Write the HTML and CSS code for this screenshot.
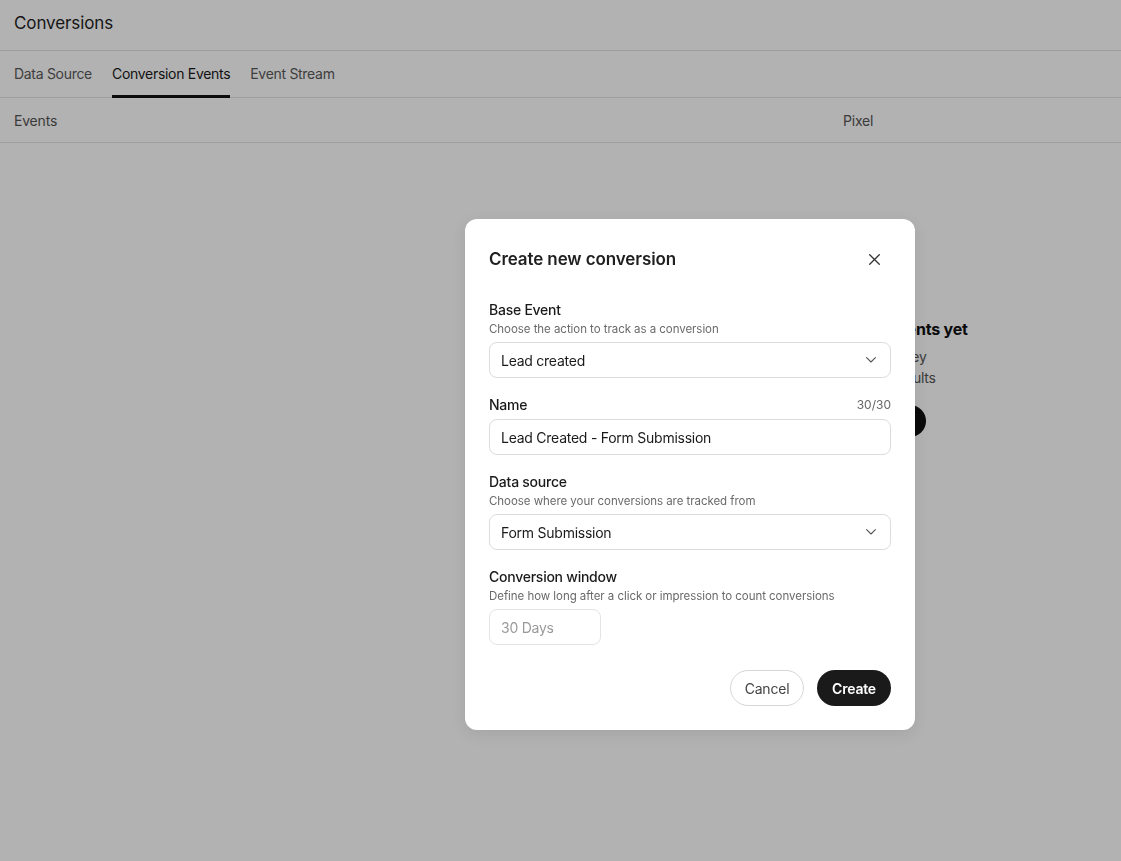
FILE: index.html
```html
<!DOCTYPE html>
<html lang="en">
<head>
<meta charset="utf-8">
<title>Conversions</title>
<link rel="stylesheet" href="styles.css">
</head>
<body>
<div class="page">
  <header class="page-header">Conversions</header>
  <nav class="tabs">
    <a class="tab">Data Source</a>
    <a class="tab active">Conversion Events</a>
    <a class="tab">Event Stream</a>
  </nav>
  <div class="table-head">
    <span class="col-events">Events</span>
    <span class="col-pixel">Pixel</span>
  </div>
  <div class="empty">
    <div class="empty-title">No conversion events yet</div>
    <div class="empty-text">Track the journey<br>and measure results</div>
    <button class="empty-btn">Create event</button>
  </div>
</div>

<div class="overlay"></div>

<div class="modal" role="dialog">
  <div class="modal-head">
    <h2 class="modal-title">Create new conversion</h2>
    <button class="close" aria-label="Close">
      <svg width="11" height="11" viewBox="0 0 11 11"><path d="M0.7 0.7 L10.3 10.3 M10.3 0.7 L0.7 10.3" stroke="#333" stroke-width="1.3" stroke-linecap="round" fill="none"/></svg>
    </button>
  </div>

  <div class="field first">
    <div class="label-row"><span class="label">Base Event</span></div>
    <div class="helper">Choose the action to track as a conversion</div>
    <div class="control select">
      <span>Lead created</span>
      <svg class="chev" width="10" height="6" viewBox="0 0 10 6"><path d="M0.6 0.6 L5 5 L9.4 0.6" stroke="#555" stroke-width="1.1" fill="none" stroke-linecap="round" stroke-linejoin="round"/></svg>
    </div>
  </div>

  <div class="field">
    <div class="label-row"><span class="label">Name</span><span class="counter">30/30</span></div>
    <div class="control"><span>Lead Created - Form Submission</span></div>
  </div>

  <div class="field">
    <div class="label-row"><span class="label">Data source</span></div>
    <div class="helper">Choose where your conversions are tracked from</div>
    <div class="control select">
      <span>Form Submission</span>
      <svg class="chev" width="10" height="6" viewBox="0 0 10 6"><path d="M0.6 0.6 L5 5 L9.4 0.6" stroke="#555" stroke-width="1.1" fill="none" stroke-linecap="round" stroke-linejoin="round"/></svg>
    </div>
  </div>

  <div class="field">
    <div class="label-row"><span class="label">Conversion window</span></div>
    <div class="helper">Define how long after a click or impression to count conversions</div>
    <div class="control small muted"><span>30 Days</span></div>
  </div>

  <div class="modal-foot">
    <button class="btn btn-cancel">Cancel</button>
    <button class="btn btn-create">Create</button>
  </div>
</div>
</body>
</html>
```

FILE: styles.css
```css
* { box-sizing: border-box; }
html, body { margin: 0; padding: 0; }
body {
  font-family: Inter, "Noto Sans", sans-serif;
  background: #ffffff;
  color: #1a1a1a;
  width: 1121px;
  height: 861px;
  overflow: hidden;
}
.page { position: relative; height: 861px; }
.page-header {
  height: 51px;
  padding: 12px 14px 0;
  font-size: 17px;
  line-height: 22px;
  color: #1f1f1f;
  letter-spacing: -0.1px;
  border-bottom: 1px solid #e3e3e3;
}
.tabs {
  display: flex;
  gap: 20px;
  padding: 0 14px;
  height: 47px;
  border-bottom: 1px solid #e3e3e3;
}
.tab {
  font-size: 14px;
  letter-spacing: -0.3px;
  line-height: 46px;
  color: #5a5a5a;
  border-bottom: 3px solid transparent;
  height: 47px;
  margin-bottom: -1px;
}
.tab.active { color: #1a1a1a; border-bottom-color: #111; }
.table-head {
  display: flex;
  height: 45px;
  align-items: center;
  padding: 0 14px;
  font-size: 14px;
  letter-spacing: -0.2px;
  color: #555;
  border-bottom: 1px solid #e3e3e3;
}
.col-events { width: 829px; }
.empty {
  width: 300px;
  margin: 175px 0 0 721px;
  text-align: center;
}
.empty-title { font-size: 16px; font-weight: 700; line-height: 22px; color: #111; letter-spacing: -0.2px; }
.empty-text { margin-top: 6px; font-size: 14px; line-height: 21px; color: #555; letter-spacing: -0.25px; }
.empty-btn {
  margin-top: 17px;
  height: 32px;
  width: 110px;
  border: 0;
  border-radius: 16px;
  background: #111;
  color: #fff;
  font: 600 13px Inter, sans-serif;
}
.overlay {
  position: fixed;
  inset: 0;
  background: rgba(0, 0, 0, 0.3);
}
.modal {
  position: absolute;
  left: 465px;
  top: 219px;
  width: 450px;
  padding: 24px;
  background: #fff;
  border-radius: 12px;
  box-shadow: 0 4px 16px rgba(0,0,0,0.08);
}
.modal-head {
  display: flex;
  align-items: center;
  justify-content: space-between;
  height: 32px;
}
.modal-title { margin: 0; font-size: 17px; font-weight: 600; color: #1f1f1f; letter-spacing: -0.1px; }
.close {
  border: 0; background: none; padding: 0;
  width: 11px; height: 11px;
  display: flex; align-items: center; justify-content: center;
  margin-right: 11px;
}
.field { margin-top: 16px; }
.field.first { margin-top: 24px; }
.label-row { display: flex; justify-content: space-between; align-items: center; height: 20px; }
.label { font-size: 14px; font-weight: 500; color: #1a1a1a; letter-spacing: -0.25px; }
.counter { font-size: 12px; color: #666; }
.helper { margin-top: 2px; font-size: 11.5px; line-height: 16px; color: #6a6a6a; letter-spacing: -0.05px; }
.control {
  margin-top: 5px;
  height: 36px;
  border: 1px solid #dcdcdc;
  border-radius: 8px;
  padding: 0 14px 0 11px;
  display: flex;
  align-items: center;
  justify-content: space-between;
  font-size: 14px;
  letter-spacing: -0.25px;
  color: #1a1a1a;
}
.control.small { width: 112px; }
.control.muted { color: #9a9a9a; border-color: #e4e4e4; }
.modal-foot {
  display: flex;
  justify-content: flex-end;
  gap: 13px;
  margin-top: 25px;
}
.btn {
  height: 36px;
  width: 74px;
  border-radius: 18px;
  font-family: Inter, sans-serif;
  font-size: 14px;
  letter-spacing: -0.2px;
  padding: 0;
}
.btn-cancel { background: #fff; border: 1px solid #d6d6d6; color: #444; }
.btn-create { background: #1a1a1a; border: 0; color: #fff; font-weight: 600; }
```
